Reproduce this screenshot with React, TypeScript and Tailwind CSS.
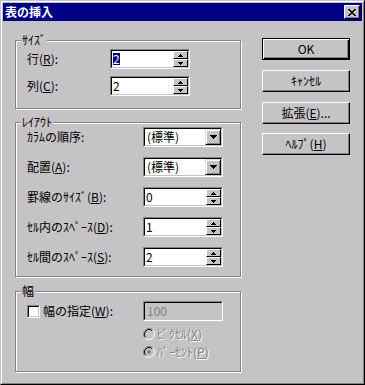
import React from "react";

const FACE = "#c6c3c6";

function M({ c }: { c: string }) {
  return <span className="underline underline-offset-[1px] decoration-1">{c}</span>;
}

function SpinArrow({ up }: { up: boolean }) {
  return (
    <svg width="5" height="3" viewBox="0 0 5 3" shapeRendering="crispEdges">
      {up ? (
        <>
          <rect x="2" y="0" width="1" height="1" fill="#000" />
          <rect x="1" y="1" width="3" height="1" fill="#000" />
          <rect x="0" y="2" width="5" height="1" fill="#000" />
        </>
      ) : (
        <>
          <rect x="0" y="0" width="5" height="1" fill="#000" />
          <rect x="1" y="1" width="3" height="1" fill="#000" />
          <rect x="2" y="2" width="1" height="1" fill="#000" />
        </>
      )}
    </svg>
  );
}

function DropArrow() {
  return (
    <svg width="7" height="4" viewBox="0 0 7 4" shapeRendering="crispEdges">
      <rect x="0" y="0" width="7" height="1" fill="#000" />
      <rect x="1" y="1" width="5" height="1" fill="#000" />
      <rect x="2" y="2" width="3" height="1" fill="#000" />
      <rect x="3" y="3" width="1" height="1" fill="#000" />
    </svg>
  );
}

function CloseGlyph() {
  const r: [number, number, number][] = [
    [0, 0, 2], [6, 0, 2], [1, 1, 2], [5, 1, 2], [2, 2, 4], [3, 3, 2], [2, 4, 4], [1, 5, 2], [5, 5, 2], [0, 6, 2], [6, 6, 2],
  ];
  return (
    <svg width="8" height="7" viewBox="0 0 8 7" shapeRendering="crispEdges">
      {r.map(([x, y, w], i) => (
        <rect key={i} x={x} y={y} width={w} height="1" fill="#000" />
      ))}
    </svg>
  );
}

function Sunken({ children, bg = "bg-white", w = "w-[80px]" }: { children: React.ReactNode; bg?: string; w?: string }) {
  return (
    <div className={`${w} h-[20px] border border-t-[#848284] border-l-[#848284] border-r-white border-b-white`}>
      <div className={`h-full flex border border-t-black border-l-black border-r-[#c6c3c6] border-b-[#c6c3c6] ${bg}`}>
        {children}
      </div>
    </div>
  );
}

function SpinBtn({ up }: { up: boolean }) {
  return (
    <div className="h-[8px] flex items-center justify-center bg-[#c6c3c6] border border-t-white border-l-white border-r-black border-b-black">
      <SpinArrow up={up} />
    </div>
  );
}

function Spin({ value, selected }: { value: string; selected?: boolean }) {
  return (
    <Sunken>
      <div className="flex-1 flex items-center pl-px">
        {selected ? (
          <span className="bg-[#000084] text-white leading-[12px]">{value}</span>
        ) : (
          <span className="leading-[12px]">{value}</span>
        )}
      </div>
      <div className="w-[15px] flex flex-col">
        <SpinBtn up />
        <SpinBtn up={false} />
      </div>
    </Sunken>
  );
}

function Combo({ value }: { value: string }) {
  return (
    <Sunken>
      <div className="flex-1 flex items-center pl-[2px] leading-[12px]">{value}</div>
      <div className="w-[16px] h-full flex items-center justify-center bg-[#c6c3c6] border border-t-[#dfdfdf] border-l-[#dfdfdf] border-r-black border-b-black shadow-[inset_1px_1px_0_#fff,inset_-1px_-1px_0_#848284]">
        <DropArrow />
      </div>
    </Sunken>
  );
}

function Group({ label, h, className = "", children }: { label: string; h: string; className?: string; children: React.ReactNode }) {
  return (
    <div className={`relative w-[226px] ${h} border border-[#848284] shadow-[inset_1px_1px_0_#fff,1px_1px_0_#fff] ${className}`}>
      <div className="absolute top-[-8px] left-[5px] px-px bg-[#c6c3c6] leading-[14px]">{label}</div>
      {children}
    </div>
  );
}

function Row({ labelW, label, children }: { labelW: string; label: React.ReactNode; children: React.ReactNode }) {
  return (
    <div className="flex items-center h-[20px]">
      <div className={`${labelW} leading-[14px] whitespace-nowrap`}>{label}</div>
      {children}
    </div>
  );
}

function PushButton({ children, def, className = "" }: { children: React.ReactNode; def?: boolean; className?: string }) {
  const cls = def
    ? "border border-black shadow-[inset_1px_1px_0_#fff,inset_-1px_-1px_0_#000,inset_-2px_-2px_0_#848284]"
    : "border border-t-white border-l-white border-r-black border-b-black shadow-[inset_-1px_-1px_0_#848284]";
  return (
    <div className={`w-[88px] h-[22px] flex items-center justify-center bg-[#c6c3c6] leading-[14px] ${cls} ${className}`}>
      {children}
    </div>
  );
}

function Radio({ checked }: { checked?: boolean }) {
  return (
    <svg width="12" height="12" viewBox="0 0 12 12">
      <circle cx="6" cy="6" r="5" fill={FACE} />
      <path d="M 2.11 9.89 A 5.5 5.5 0 0 1 9.89 2.11" stroke="#848284" strokeWidth="1" fill="none" />
      <path d="M 9.89 2.11 A 5.5 5.5 0 0 1 2.11 9.89" stroke="#fff" strokeWidth="1" fill="none" />
      <path d="M 2.82 9.18 A 4.5 4.5 0 0 1 9.18 2.82" stroke="#000" strokeWidth="1" fill="none" />
      <path d="M 9.18 2.82 A 4.5 4.5 0 0 1 2.82 9.18" stroke={FACE} strokeWidth="1" fill="none" />
      {checked && <circle cx="6" cy="6" r="2" fill="#848284" />}
    </svg>
  );
}

export default function App() {
  return (
    <div className="w-[365px] h-[385px] bg-[#c6c3c6] font-['Noto_Sans_CJK_JP',sans-serif] text-[12px] text-black border border-t-[#c6c3c6] border-l-[#c6c3c6] border-r-black border-b-black">
      <div className="h-full flex flex-col border border-t-white border-l-white border-r-[#848284] border-b-[#848284] p-px">
        {/* title bar */}
        <div className="h-[18px] bg-[#000084] flex items-center justify-between pl-[2px] pr-[2px]">
          <span className="text-white font-bold text-[12px] leading-[14px]">表の挿入</span>
          <div className="w-[16px] h-[14px] flex items-center justify-center bg-[#c6c3c6] border border-t-white border-l-white border-r-black border-b-black shadow-[inset_-1px_-1px_0_#848284]">
            <CloseGlyph />
          </div>
        </div>

        <div className="flex pl-[12px]">
          {/* left column */}
          <div className="w-[226px] flex flex-col mt-[19px]">
            <Group label="ｻｲｽﾞ" h="h-[69px]">
              <div className="flex flex-col gap-[7px] pt-[8px] pl-[11px]">
                <Row labelW="w-[83px]" label={<>行(<M c="R" />):</>}>
                  <Spin value="2" selected />
                </Row>
                <Row labelW="w-[83px]" label={<>列(<M c="C" />):</>}>
                  <Spin value="2" />
                </Row>
              </div>
            </Group>

            <Group label="ﾚｲｱｳﾄ" h="h-[155px]" className="mt-[13px]">
              <div className="flex flex-col gap-[10px] pt-[4px] pl-[11px]">
                <Row labelW="w-[116px]" label="ｶﾗﾑの順序:">
                  <Combo value="(標準)" />
                </Row>
                <Row labelW="w-[116px]" label={<>配置(<M c="A" />):</>}>
                  <Combo value="(標準)" />
                </Row>
                <Row labelW="w-[116px]" label={<>罫線のｻｲｽﾞ(<M c="B" />):</>}>
                  <Spin value="0" />
                </Row>
                <Row labelW="w-[116px]" label={<>ｾﾙ内のｽﾍﾟｰｽ(<M c="D" />):</>}>
                  <Spin value="1" />
                </Row>
                <Row labelW="w-[116px]" label={<>ｾﾙ間のｽﾍﾟｰｽ(<M c="S" />):</>}>
                  <Spin value="2" />
                </Row>
              </div>
            </Group>

            <Group label="幅" h="h-[81px]" className="mt-[14px]">
              <div className="flex flex-col pt-[9px] pl-[11px]">
                <div className="flex items-center h-[20px]">
                  <div className="w-[116px] flex items-center">
                    <div className="w-[13px] h-[13px] border border-t-[#848284] border-l-[#848284] border-r-white border-b-white">
                      <div className="h-full bg-white border border-t-black border-l-black border-r-[#c6c3c6] border-b-[#c6c3c6]" />
                    </div>
                    <span className="ml-[3px] leading-[14px]">
                      幅の指定(<M c="W" />):
                    </span>
                  </div>
                  <Sunken bg="bg-[#c6c3c6]">
                    <div className="flex-1 flex items-center pl-[2px] leading-[12px] text-[#848284]">100</div>
                  </Sunken>
                </div>
                <div className="flex flex-col pl-[116px] mt-[4px] text-[#848284] [text-shadow:1px_1px_0_#fff]">
                  <div className="flex items-center h-[18px] gap-[2px]">
                    <Radio />
                    <span className="leading-[14px]">
                      ﾋﾟｸｾﾙ(<M c="X" />)
                    </span>
                  </div>
                  <div className="flex items-center h-[18px] gap-[2px]">
                    <Radio checked />
                    <span className="leading-[14px]">
                      ﾊﾟｰｾﾝﾄ(<M c="P" />)
                    </span>
                  </div>
                </div>
              </div>
            </Group>
          </div>

          {/* right column */}
          <div className="flex flex-col ml-[21px] mt-[17px]">
            <PushButton def>OK</PushButton>
            <PushButton className="mt-[10px]">ｷｬﾝｾﾙ</PushButton>
            <PushButton className="mt-[10px]">
              <span>
                拡張(<M c="E" />)...
              </span>
            </PushButton>
            <PushButton className="mt-[9px]">
              <span>
                ﾍﾙﾌﾟ(<M c="H" />)
              </span>
            </PushButton>
          </div>
        </div>
      </div>
    </div>
  );
}
